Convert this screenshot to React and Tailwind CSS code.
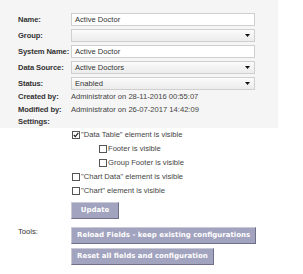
import React from 'react';

const font = { fontFamily: '"Liberation Sans", Arial, sans-serif' };

function Field({ label, value, select, last }) {
  return (
    <div className={`flex h-[13px] items-center ${last ? '' : 'mb-[3px]'}`}>
      <div className="w-[53px] shrink-0 whitespace-nowrap text-[7.6px] font-bold tracking-[-0.1px] text-[#333]">{label}</div>
      <div
        className={`flex h-[13px] w-[184px] items-center justify-between border border-[#cfcfcf] px-[3px] text-[7.6px] text-[#333] ${
          select ? 'bg-gradient-to-b from-[#fbfbfb] to-[#ececec]' : 'bg-white'
        }`}
      >
        <span>{value}</span>
        {select && (
          <svg width="5" height="3" viewBox="0 0 5 3" className="mr-[1px]">
            <path d="M0 0h5L2.5 3z" fill="#111" />
          </svg>
        )}
      </div>
    </div>
  );
}

function Info({ label, value, short }) {
  return (
    <div className={`flex items-center ${short ? 'h-[12px]' : 'h-[13px]'}`}>
      <div className="w-[53px] shrink-0 whitespace-nowrap text-[7.6px] font-bold tracking-[-0.1px] text-[#333]">{label}</div>
      <div className="whitespace-nowrap text-[7.6px] text-[#444]">{value}</div>
    </div>
  );
}

function Check({ checked, label, indent }) {
  return (
    <div className={`flex h-[14px] items-center ${indent ? 'pl-[28px]' : 'pl-[1px]'}`}>
      <div className="flex h-[8px] w-[8px] items-center justify-center border border-[#555] bg-white">
        {checked && (
          <svg width="6" height="6" viewBox="0 0 6 6">
            <path d="M0.8 3l1.5 1.6L5.3 0.8" stroke="#222" strokeWidth="1.2" fill="none" />
          </svg>
        )}
      </div>
      <span className="ml-[1px] whitespace-nowrap text-[7.6px] text-[#444]">{label}</span>
    </div>
  );
}

function Btn({ children, className = '' }) {
  return (
    <button
      type="button"
      className={`flex h-[17px] items-center justify-center border border-[#c9c9d8] border-r-[#6f6f88] border-b-[#6f6f88] bg-[#a2a3be] px-[5px] text-[7px] font-bold leading-none text-white ${className}`}
      style={{ fontFamily: '"DejaVu Sans", Verdana, sans-serif' }}
    >
      {children}
    </button>
  );
}

export default function App() {
  return (
    <div className="h-[274px] w-[303px] bg-white" style={font}>
      <div className="w-[278px] bg-[#f5f5f5] pl-[18px] pt-[13px]">
        <Field label="Name:" value="Active Doctor" />
        <Field label="Group:" value="" select />
        <Field label="System Name:" value="Active Doctor" />
        <Field label="Data Source:" value="Active Doctors" select />
        <Field label="Status:" value="Enabled" select last />
        <Info label="Created by:" value="Administrator on 28-11-2016 00:55:07" />
        <Info label="Modified by:" value="Administrator on 26-07-2017 14:42:09" />
        <Info label="Settings:" value="" short />
      </div>
      <div className="pl-[71px]">
        <Check checked label={'"Data Table" element is visible'} />
        <Check indent label="Footer is visible" />
        <Check indent label="Group Footer is visible" />
        <Check label={'"Chart Data" element is visible'} />
        <Check label={'"Chart" element is visible'} />
        <div className="mt-[4px] flex">
          <Btn className="w-[48px]">Update</Btn>
        </div>
      </div>
      <div className="mt-[8px] flex">
        <div className="w-[71px] shrink-0 pl-[18px] pt-[1px] text-[7.6px] leading-none text-[#333]">Tools:</div>
        <div className="flex flex-col items-start gap-[4px]">
          <Btn>Reload Fields - keep existing configurations</Btn>
          <Btn>Reset all fields and configuration</Btn>
        </div>
      </div>
    </div>
  );
}
